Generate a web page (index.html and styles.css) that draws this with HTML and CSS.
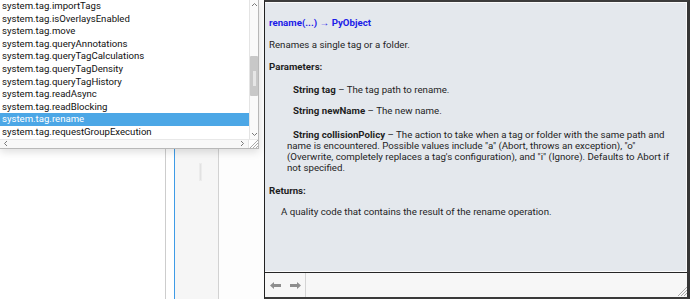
FILE: index.html
```html
<!DOCTYPE html>
<html lang="en">
<head>
<meta charset="UTF-8">
<title>Script Console - system.tag.rename</title>
<link rel="stylesheet" href="styles.css">
</head>
<body>

<div class="stage">

  <!-- EDITOR BEHIND THE POPUP -->
  <div class="editor">
    <div class="pane"></div>
    <div class="margin"></div>
    <div class="ruler"></div>
    <div class="gutter"><div class="gutter-thumb"></div></div>
    <div class="rest"></div>
  </div>

  <!-- DOC PANEL -->
  <div class="doc">
    <div class="doc-body">
      <div class="sig">rename(...) &rarr; PyObject</div>
      <p class="desc">Renames a single tag or a folder.</p>
      <div class="label">Parameters:</div>
      <p class="param p1"><b>String tag</b> &ndash; The tag path to rename.</p>
      <p class="param p2"><b>String newName</b> &ndash; The new name.</p>
      <p class="param p3"><b>String collisionPolicy</b> &ndash; The action to take when a tag or folder with the same path and name is encountered. Possible values include "a" (Abort, throws an exception), "o" (Overwrite, completely replaces a tag's configuration), and "i" (Ignore). Defaults to Abort if not specified.</p>
      <div class="label returns">Returns:</div>
      <p class="ret">A quality code that contains the result of the rename operation.</p>
    </div>
    <div class="doc-foot">
      <div class="nav">
        <svg width="11" height="7" viewBox="0 0 11 7"><polygon points="0,3.5 4,0 4,2 11,2 11,5 4,5 4,7" fill="#8e8e8e"/></svg>
        <svg width="11" height="7" viewBox="0 0 11 7"><polygon points="11,3.5 7,0 7,2 0,2 0,5 7,5 7,7" fill="#8e8e8e"/></svg>
      </div>
      <div class="foot-space"></div>
      <svg class="grip" width="10" height="10" viewBox="0 0 10 10">
        <path d="M1 10 L10 1 M4 10 L10 4 M7 10 L10 7" stroke="#a9a9a9" stroke-width="1"/>
      </svg>
    </div>
  </div>
</div>

<!-- COMPLETION POPUP -->
<div class="popup">
  <div class="popup-main">
    <div class="list">
      <div class="row">system.tag.importTags</div>
      <div class="row">system.tag.isOverlaysEnabled</div>
      <div class="row">system.tag.move</div>
      <div class="row">system.tag.queryAnnotations</div>
      <div class="row">system.tag.queryTagCalculations</div>
      <div class="row">system.tag.queryTagDensity</div>
      <div class="row">system.tag.queryTagHistory</div>
      <div class="row">system.tag.readAsync</div>
      <div class="row">system.tag.readBlocking</div>
      <div class="row selected">system.tag.rename</div>
      <div class="row">system.tag.requestGroupExecution</div>
    </div>
    <div class="vscroll">
      <svg class="arrow" width="7" height="5" viewBox="0 0 7 5"><path d="M1 4 L3.5 1.5 L6 4" fill="none" stroke="#7a7a7a"/></svg>
      <div class="track"><div class="thumb"><div class="thumb-grip"></div></div></div>
      <svg class="arrow" width="7" height="5" viewBox="0 0 7 5"><path d="M1 1 L3.5 3.5 L6 1" fill="none" stroke="#7a7a7a"/></svg>
    </div>
  </div>
  <div class="hscroll">
    <div class="hbar">
      <svg width="5" height="7" viewBox="0 0 5 7"><path d="M4 1 L1.5 3.5 L4 6" fill="none" stroke="#7a7a7a"/></svg>
      <svg width="5" height="7" viewBox="0 0 5 7"><path d="M1 1 L3.5 3.5 L1 6" fill="none" stroke="#7a7a7a"/></svg>
    </div>
    <svg class="corner" width="9" height="8" viewBox="0 0 9 8">
      <path d="M1 8 L9 0 M4 8 L9 3 M7 8 L9 6" stroke="#a9a9a9" stroke-width="1"/>
    </svg>
  </div>
</div>

</body>
</html>
```
FILE: styles.css
```css
body {
  margin: 0;
  width: 690px;
  height: 299px;
  overflow: hidden;
  position: relative;
  background: #fff;
  font-family: 'Roboto', 'Liberation Sans', sans-serif;
  color: #1e1e1e;
}
.stage {
  display: flex;
  height: 299px;
}

/* editor */
.editor {
  width: 264px;
  flex: none;
  display: flex;
}
.editor .pane {
  width: 165px;
  border-right: 1px solid #cdcdcd;
}
.editor .margin {
  width: 8px;
}
.editor .ruler {
  width: 1px;
  background: #3f9be6;
}
.editor .gutter {
  width: 44px;
  background: #f6f6f6;
  border-right: 1px solid #d2d2d2;
  padding: 163px 0 0 24px;
  box-sizing: border-box;
}
.gutter-thumb {
  width: 3px;
  height: 18px;
  background: #e2e2e2;
  border: 1px solid #ececec;
  box-sizing: border-box;
}
.editor .rest {
  flex: 1;
  background: #fdfdfd;
}

/* doc panel */
.doc {
  flex: 1;
  display: flex;
  flex-direction: column;
  border-top: 2px solid #3c3c3c;
  border-left: 1px solid #222;
  border-right: 3px solid #363636;
  border-bottom: 2px solid #3a3a3a;
}
.doc-body {
  flex: 1;
  background: #e4e8ed;
  box-shadow: inset 0 1px 0 #fafafa, inset -1px 0 0 #fafafa, inset 0 -1px 0 #fafafa;
  padding: 14.5px 8px 0 4px;
  font-size: 9.7px;
  line-height: 11px;
}
.doc-body p {
  margin: 0;
}
.sig {
  color: #1c1ce8;
  font-weight: bold;
}
.desc {
  margin-top: 11px !important;
}
.label {
  font-weight: bold;
  margin-top: 11.5px;
}
.param {
  padding-left: 18px;
  text-indent: 6px;
}
.p1 { margin-top: 11.5px !important; }
.p2 { margin-top: 10px !important; }
.p3 { margin-top: 13px !important; }
.label.returns {
  margin-top: 12px;
}
.ret {
  padding-left: 12px;
  margin-top: 10px !important;
}
.doc-foot {
  height: 24px;
  border-top: 1px solid #262626;
  background: #f7f7f7;
  display: flex;
  align-items: center;
}
.nav {
  width: 41px;
  height: 24px;
  border-right: 1px solid #d4d4d4;
  display: flex;
  align-items: center;
  gap: 9px;
  padding: 0 0 0 5px;
  box-sizing: border-box;
}
.foot-space { flex: 1; }
.grip {
  align-self: flex-end;
  margin: 0 0 1px 0;
}

/* completion popup */
.popup {
  position: absolute;
  top: 0;
  left: 0;
  width: 258px;
  border-right: 1px solid #b8b8b8;
  border-bottom: 1px solid #b8b8b8;
  background: #fff;
  box-shadow: 0 3px 8px rgba(0,0,0,0.13);
}
.popup-main {
  display: flex;
}
.list {
  width: 249px;
  font-size: 9.6px;
  color: #111;
}
.row {
  height: 12.6px;
  line-height: 12.6px;
  padding-left: 2px;
  white-space: nowrap;
}
.row.selected {
  background: #4ca7e6;
  color: #fff;
}
.vscroll {
  width: 8px;
  border-left: 1px solid #e4e4e4;
  background: #fafafa;
  display: flex;
  flex-direction: column;
  align-items: center;
}
.vscroll .arrow {
  margin: 2px 0;
}
.track {
  flex: 1;
  width: 100%;
  padding-top: 47px;
}
.thumb {
  height: 40px;
  background: #c8c8c8;
  border-radius: 1px;
  padding-top: 15px;
  box-sizing: border-box;
}
.thumb-grip {
  width: 3px;
  height: 15px;
  margin-left: 3px;
  background: #e6e6e6;
}
.hscroll {
  display: flex;
  height: 8px;
  border-top: 1px solid #e8e8e8;
}
.hbar {
  width: 249px;
  background: #f8f8f8;
  display: flex;
  align-items: center;
  justify-content: space-between;
  padding: 0 3px 0 3px;
  box-sizing: border-box;
}
.corner {
  border-left: 1px solid #e4e4e4;
}
```
